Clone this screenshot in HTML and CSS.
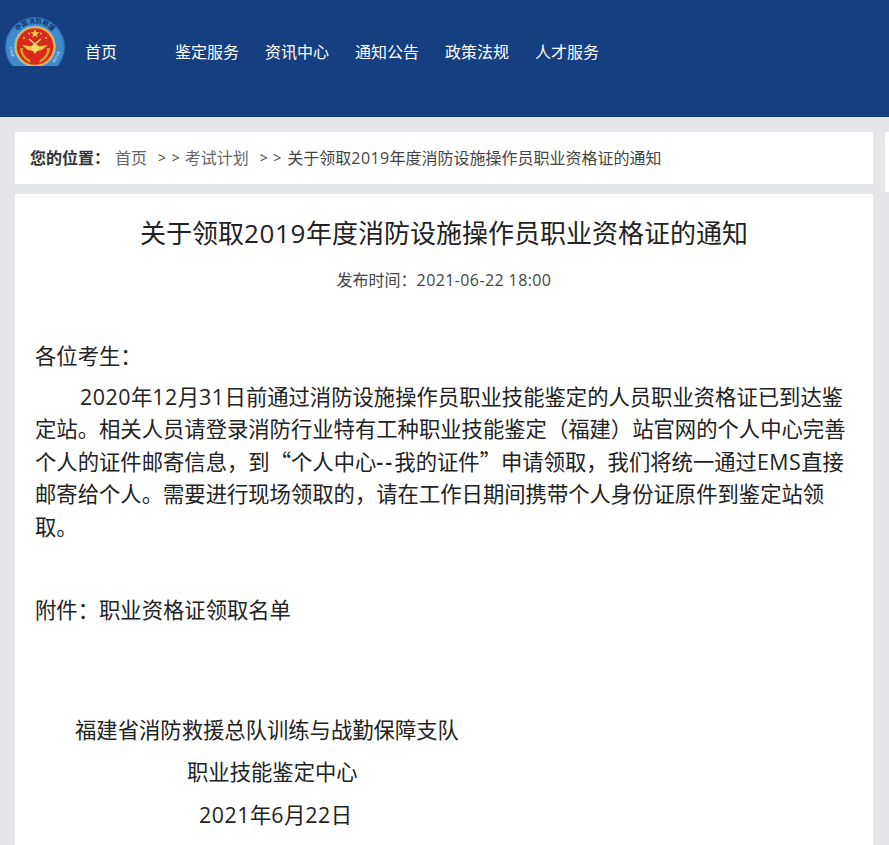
FILE: index.html
```html
<!DOCTYPE html>
<html lang="zh-CN">
<head>
<meta charset="utf-8">
<title>关于领取2019年度消防设施操作员职业资格证的通知</title>
<link rel="stylesheet" href="styles.css">
</head>
<body>
<header class="header">
  <div class="logo-box">
    <svg class="logo" width="60" height="49" viewBox="0 0 60 49" aria-hidden="true">
      <circle cx="30" cy="30" r="30" fill="#2a6fb5"/>
      <circle cx="30" cy="30" r="28.800" fill="#3f8bcb"/>
      <circle cx="30" cy="29.500" r="20.800" fill="#8dbfe3"/>
      <circle cx="30" cy="29.500" r="20" fill="#e7b53f"/>
      <circle cx="30" cy="29.500" r="18.300" fill="#d62a1e"/>
      <path d="M30 12l1.200 3.300h3.400l-2.800 2 1 3.300-2.800-2-2.800 2 1-3.300-2.800-2h3.400z" fill="#f5d24f"/>
      <circle cx="19" cy="21" r="1" fill="#f3cd4a"/><circle cx="24" cy="16.500" r="1" fill="#f3cd4a"/><circle cx="36" cy="16.500" r="1" fill="#f3cd4a"/><circle cx="41" cy="21" r="1" fill="#f3cd4a"/>
      <path d="M24 22l12 10M36 22L24 32" stroke="#f6dc78" stroke-width="1.500"/>
      <path d="M17 28l10 1.500 3-1.500 3 1.500 10-1.500-6 5-5 1-2 3-2-3-5-1z" fill="#efc544"/>
      <circle cx="30" cy="31" r="3.500" fill="#f8dc6a"/>
      <path d="M15 31c0 6 4 12 11 15l-1-3c-4-2-8-7-7-12zM45 31c0 6-4 12-11 15l1-3c4-2 8-7 7-12z" fill="#d9a32d"/>
      <path id="logo-arc" d="M7.500 29A22.500 22.500 0 0 1 52.500 29" fill="none"/>
      <path id="logo-low-l" d="M4.500 30A26 26 0 0 0 11 46" fill="none"/>
      <path id="logo-low-r" d="M49 46A26 26 0 0 0 55.500 30" fill="none"/>
      <text class="logo-top"><textPath href="#logo-arc" startOffset="50%" text-anchor="middle">中国消防救援</textPath></text>
      <text class="logo-low"><textPath href="#logo-low-l">CHINA</textPath></text>
      <text class="logo-low"><textPath href="#logo-low-r">RESCUE</textPath></text>
    </svg>
  </div>
  <nav class="nav">
    <a class="nav-item" href="#">首页</a>
    <a class="nav-item" href="#">鉴定服务</a>
    <a class="nav-item" href="#">资讯中心</a>
    <a class="nav-item" href="#">通知公告</a>
    <a class="nav-item" href="#">政策法规</a>
    <a class="nav-item" href="#">人才服务</a>
  </nav>
</header>
<div class="layout">
  <main class="main">
    <div class="crumbs">
      <b class="crumb-label">您的位置：</b>
      <a class="crumb-link" href="#">首页</a>
      <span class="crumb-sep">&gt; &gt;</span>
      <a class="crumb-link" href="#">考试计划</a>
      <span class="crumb-sep crumb-sep-last">&gt; &gt;</span>
      <span class="crumb-current">关于领取<span class="num">2019</span>年度消防设施操作员职业资格证的通知</span>
    </div>
    <article class="article">
      <h1 class="title">关于领取<span class="num">2019</span>年度消防设施操作员职业资格证的通知</h1>
      <div class="meta">发布时间：<span class="num">2021-06-22 18:00</span></div>
      <div class="body">
        <p class="greet">各位考生：</p>
        <p class="indent"><span class="num">2020</span>年<span class="num">12</span>月<span class="num">31</span>日前通过消防设施操作员职业技能鉴定的人员职业资格证已到达鉴定站。相关人员请登录消防行业特有工种职业技能鉴定（福建）站官网的个人中心完善个人的证件邮寄信息，到<span class="cjk">“</span>个人中心<span class="num dash">--</span>我的证件<span class="cjk">”</span>申请领取，我们将统一通过<span class="num">EMS</span>直接邮寄给个人。需要进行现场领取的，请在工作日期间携带个人身份证原件到鉴定站领取。</p>
        <p class="blank">&nbsp;</p>
        <p class="attach">附件：职业资格证领取名单</p>
        <p class="blank">&nbsp;</p>
        <p class="blank">&nbsp;</p>
        <p class="sign-a">福建省消防救援总队训练与战勤保障支队</p>
        <p class="sign-b">职业技能鉴定中心</p>
        <p class="sign-c"><span class="num">2021</span>年<span class="num">6</span>月<span class="num">22</span>日</p>
      </div>
    </article>
  </main>
  <aside class="side"></aside>
</div>
</body>
</html>
```
FILE: styles.css
```css
* { box-sizing: border-box; }
html, body { margin: 0; padding: 0; }
body {
  background: #e5e6ea;
  font-family: "Open Sans", "Noto Sans CJK SC", sans-serif;
  color: #222;
  height: 845px;
  overflow: hidden;
}
a { text-decoration: none; color: inherit; }
p { margin: 0; }
.header {
  height: 117px;
  background: #163f82;
  display: flex;
  align-items: flex-start;
}
.logo-box { padding: 17px 0 0 5px; }
.logo { display: block; }
.logo-top { font-size: 6.500px; fill: #0f2f6c; font-weight: 700; }
.logo-low { font-size: 3.500px; fill: #e8f2fa; }
.nav {
  display: flex;
  padding-top: 42px;
  padding-left: 20px;
  color: #fff;
  font-size: 16px;
  line-height: 21px;
}
.nav-item { width: 90px; }
.layout {
  display: flex;
  padding: 15px 0 0 15px;
  gap: 12px;
  align-items: flex-start;
}
.main { width: 858px; flex: none; }
.side { width: 40px; height: 60px; background: #fff; flex: none; }
.crumbs {
  height: 52px;
  background: #fff;
  padding: 15px 0 0 15px;
  font-size: 16px;
  line-height: 22px;
  color: #666;
  white-space: nowrap;
  display: flex;
}
.crumb-label { color: #333; font-weight: 700; width: 85px; }
.crumb-sep { margin: 0 4px 0 11px; color: #444; font-size: 14px; letter-spacing: 1px; }
.crumb-sep-last { margin-right: 5px; }
.crumb-current { color: #444; }
.num { letter-spacing: 0.025em; }
.cjk { font-family: "Noto Sans CJK SC", sans-serif; line-height: 1; }
.dash { letter-spacing: 0.1em; font-weight: 600; }
.article {
  margin-top: 10px;
  background: #fff;
  height: 700px;
  padding: 0 20px;
}
.title {
  margin: 0;
  padding-top: 21px;
  text-align: center;
  font-size: 26px;
  line-height: 36px;
  font-weight: 400;
  color: #222;
}
.meta {
  margin-top: 18px;
  text-align: center;
  font-size: 16px;
  line-height: 22px;
  color: #444;
}
.body {
  margin-top: 49px;
  font-size: 21.33px;
  line-height: 32.5px;
  color: #222;
}
.greet { margin-bottom: 8px; }
.indent { text-indent: 45px; margin-bottom: 9px; }
.blank { height: 32.5px; margin-bottom: 9px; }
.attach { margin-bottom: 8px; }
.blank + .blank { margin-bottom: 6px; }
.sign-a { padding-left: 40px; margin-bottom: 9.500px; }
.sign-b { padding-left: 152px; margin-bottom: 10px; }
.sign-c { padding-left: 164px; }
```
